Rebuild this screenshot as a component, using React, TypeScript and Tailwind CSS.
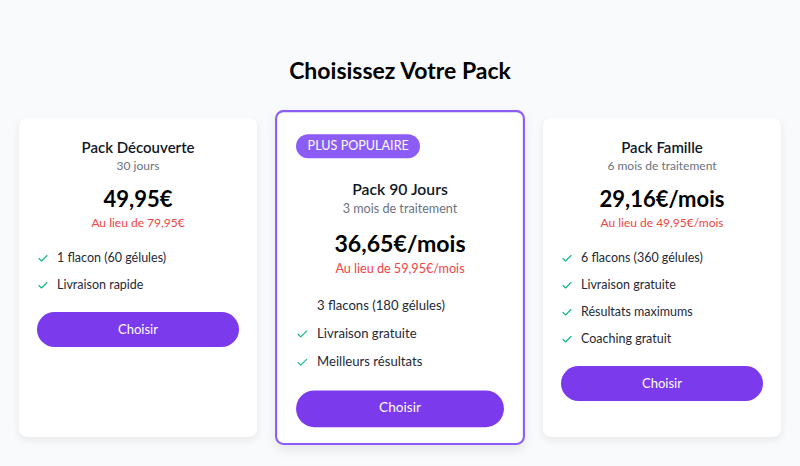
import { Check } from "lucide-react";

interface Pack {
  name: string;
  duration: string;
  price: string;
  oldPrice: string;
  features: { label: string; icon: boolean }[];
  popular?: boolean;
}

const packs: Pack[] = [
  {
    name: "Pack Découverte",
    duration: "30 jours",
    price: "49,95€",
    oldPrice: "Au lieu de 79,95€",
    features: [
      { label: "1 flacon (60 gélules)", icon: true },
      { label: "Livraison rapide", icon: true },
    ],
  },
  {
    name: "Pack 90 Jours",
    duration: "3 mois de traitement",
    price: "36,65€/mois",
    oldPrice: "Au lieu de 59,95€/mois",
    popular: true,
    features: [
      { label: "3 flacons (180 gélules)", icon: false },
      { label: "Livraison gratuite", icon: true },
      { label: "Meilleurs résultats", icon: true },
    ],
  },
  {
    name: "Pack Famille",
    duration: "6 mois de traitement",
    price: "29,16€/mois",
    oldPrice: "Au lieu de 49,95€/mois",
    features: [
      { label: "6 flacons (360 gélules)", icon: true },
      { label: "Livraison gratuite", icon: true },
      { label: "Résultats maximums", icon: true },
      { label: "Coaching gratuit", icon: true },
    ],
  },
];

function PackCard({ pack }: { pack: Pack }) {
  return (
    <div
      className={
        pack.popular
          ? "flex flex-col rounded-lg bg-white px-[18px] pt-[18px] pb-[15px] border-2 border-[#8b5cf6] shadow-[0_4px_10px_rgba(0,0,0,0.08)] scale-105"
          : "flex flex-col rounded-lg bg-white px-[18px] pt-[18px] pb-[15px] shadow-[0_3px_8px_rgba(0,0,0,0.08)]"
      }
    >
      {pack.popular && (
        <div className="mb-[18px]">
          <span className="inline-flex h-[23px] items-center rounded-full bg-[#8b5cf6] px-[11px] text-[12px] text-white">
            PLUS POPULAIRE
          </span>
        </div>
      )}

      {/* Header */}
      <div className="text-center">
        <h3 className="text-[15px] leading-[22px] font-semibold text-[#111827]">{pack.name}</h3>
        <p className="text-[12px] leading-[16px] text-[#6b7280]">{pack.duration}</p>
        <p className="mt-[9px] text-[22px] leading-[32px] font-bold text-black">{pack.price}</p>
        <p className="text-[12px] leading-[16px] text-[#ef4444]">{pack.oldPrice}</p>
      </div>

      {/* Features */}
      <ul className="mt-[14px]">
        {pack.features.map((f) => (
          <li key={f.label} className="flex h-[27px] items-center gap-[8px] text-[12.5px] text-[#1f2937]">
            <span className="flex w-[12px] justify-center">
              {f.icon && <Check size={15} strokeWidth={2.25} className="text-[#10b981]" />}
            </span>
            {f.label}
          </li>
        ))}
      </ul>

      <button className="mt-[13px] h-[35px] w-full rounded-full bg-[#7c3aed] text-[13px] text-white">
        Choisir
      </button>
    </div>
  );
}

export default function App() {
  return (
    <div
      className="min-h-[466px] bg-[#f9fafb] px-[19px] pt-[54px] pb-8"
      style={{ fontFamily: "Lato, 'Noto Sans', sans-serif" }}
    >
      <h2 className="text-center text-[23px] leading-[32px] font-bold text-black">Choisissez Votre Pack</h2>
      <div className="mt-[32px] grid grid-cols-3 gap-6 items-stretch">
        {packs.map((p) => (
          <PackCard key={p.name} pack={p} />
        ))}
      </div>
    </div>
  );
}
